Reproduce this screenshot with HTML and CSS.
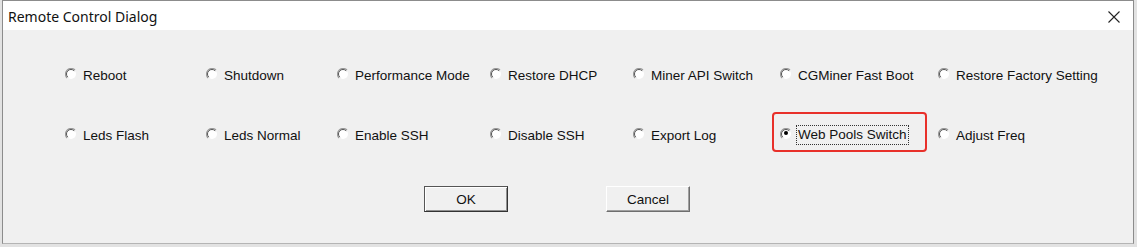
FILE: index.html
```html
<!DOCTYPE html>
<html lang="en">
<head>
    <meta charset="UTF-8">
    <title>Remote Control Dialog</title>
    <link rel="stylesheet" href="styles.css">
</head>
<body>

<svg width="0" height="0" style="position:absolute">
    <defs>
        <symbol id="radio" viewBox="0 0 12 12">
            <circle cx="6" cy="6" r="5" fill="#fff"/>
            <path d="M10 2 A5.66 5.66 0 0 0 2 10" stroke="#9a9a9a" stroke-width="1.2" fill="none"/>
            <path d="M9.2 2.8 A4.5 4.5 0 0 0 2.8 9.2" stroke="#555" stroke-width="1" fill="none"/>
        </symbol>
    </defs>
</svg>

<div class="window">
    <div class="titlebar">
        <span class="title">Remote Control Dialog</span>
        <svg class="close" width="12" height="12" viewBox="0 0 12 12">
            <path d="M0.5 0.5 L11.5 11.5 M11.5 0.5 L0.5 11.5" stroke="#222" stroke-width="1.1"/>
        </svg>
    </div>

    <div class="content">
        <div class="options">
            <label class="opt"><svg class="radio"><use href="#radio"/></svg>Reboot</label>
            <label class="opt"><svg class="radio"><use href="#radio"/></svg>Shutdown</label>
            <label class="opt"><svg class="radio"><use href="#radio"/></svg>Performance Mode</label>
            <label class="opt"><svg class="radio"><use href="#radio"/></svg>Restore DHCP</label>
            <label class="opt"><svg class="radio"><use href="#radio"/></svg>Miner API Switch</label>
            <label class="opt"><svg class="radio"><use href="#radio"/></svg>CGMiner Fast Boot</label>
            <label class="opt"><svg class="radio"><use href="#radio"/></svg>Restore Factory Setting</label>

            <label class="opt"><svg class="radio"><use href="#radio"/></svg>Leds Flash</label>
            <label class="opt"><svg class="radio"><use href="#radio"/></svg>Leds Normal</label>
            <label class="opt"><svg class="radio"><use href="#radio"/></svg>Enable SSH</label>
            <label class="opt"><svg class="radio"><use href="#radio"/></svg>Disable SSH</label>
            <label class="opt"><svg class="radio"><use href="#radio"/></svg>Export Log</label>
            <label class="opt selected">
                <svg class="radio"><use href="#radio"/></svg>
                <span class="dot"></span>
                <span class="focus">Web Pools Switch</span>
                <span class="highlight"></span>
            </label>
            <label class="opt"><svg class="radio"><use href="#radio"/></svg>Adjust Freq</label>
        </div>

        <div class="buttons">
            <button class="btn default">OK</button>
            <button class="btn">Cancel</button>
        </div>
    </div>
</div>

</body>
</html>
```

FILE: styles.css
```css
body {
    margin: 0;
    background-color: #e2e2e2;
    font-family: "Liberation Sans", Arial, sans-serif;
    color: #111;
}

.window {
    margin-left: 2px;
    width: 1130px;
    height: 242px;
    background-color: #f0f0f0;
    border: 1px solid #8c8c8c;
    border-bottom-color: #b4b4b4;
}

.titlebar {
    height: 29px;
    background-color: #fff;
    display: flex;
    align-items: center;
    justify-content: space-between;
    padding: 0 13px 0 5px;
}

.title {
    font-family: "Noto Sans", "Open Sans", sans-serif;
    font-size: 14px;
    color: #111;
    padding-top: 1px;
}

.close {
    margin-top: 2px;
}

.content {
    padding: 35px 0 0 62px;
}

.options {
    display: grid;
    grid-template-columns: 141px 131px 153px 143px 147px 158px auto;
    row-gap: 40px;
}

.opt {
    position: relative;
    display: flex;
    align-items: center;
    height: 20px;
    font-size: 13.5px;
    white-space: nowrap;
}

.radio {
    width: 12px;
    height: 12px;
    margin: -3px 6px 0 0;
    flex-shrink: 0;
}

.dot {
    position: absolute;
    left: 4px;
    top: 6px;
    width: 4px;
    height: 4px;
    border-radius: 50%;
    background-color: #000;
}

.focus {
    border: 1px dotted #333;
    padding: 1px 1px 2px 1px;
    margin-left: -2px;
}

.highlight {
    position: absolute;
    left: -8px;
    top: -13px;
    width: 151px;
    height: 36px;
    border: 2px solid #e8302a;
    border-radius: 4px;
}

.buttons {
    display: flex;
    gap: 98px;
    padding: 41px 0 0 359px;
}

.btn {
    width: 84px;
    height: 26px;
    font-family: "Liberation Sans", Arial, sans-serif;
    font-size: 13.5px;
    color: #111;
    background-color: #f0f0f0;
    border: 1px solid;
    border-color: #fff #6e6e6e #6e6e6e #fff;
    box-shadow: inset -1px -1px 0 #a0a0a0;
    padding: 0;
}

.btn.default {
    border-color: #555 #333 #333 #555;
    box-shadow: inset 1px 1px 0 #fff, inset -1px -1px 0 #909090;
}
```
